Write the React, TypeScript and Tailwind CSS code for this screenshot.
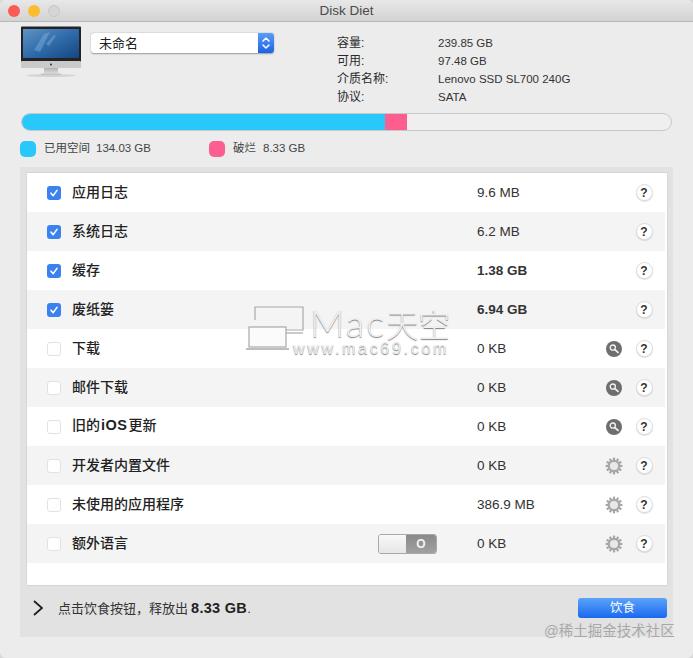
import React from "react";

const font = "font-['Liberation_Sans','Noto_Sans_CJK_SC',sans-serif]";

type Row = { label: React.ReactNode; size: string; bold?: boolean; checked?: boolean; tool?: "search" | "gear"; toggle?: boolean };

const rows: Row[] = [
  { label: "应用日志", size: "9.6 MB", checked: true },
  { label: "系统日志", size: "6.2 MB", checked: true },
  { label: "缓存", size: "1.38 GB", bold: true, checked: true },
  { label: "废纸篓", size: "6.94 GB", bold: true, checked: true },
  { label: "下载", size: "0 KB", tool: "search" },
  { label: "邮件下载", size: "0 KB", tool: "search" },
  { label: <>旧的<b className="mx-[1px] text-[14.5px] font-bold tracking-[0.5px]">iOS</b>更新</>, size: "0 KB", tool: "search" },
  { label: "开发者内置文件", size: "0 KB", tool: "gear" },
  { label: "未使用的应用程序", size: "386.9 MB", tool: "gear" },
  { label: "额外语言", size: "0 KB", tool: "gear", toggle: true },
];

const info = [
  ["容量:", "239.85 GB"],
  ["可用:", "97.48 GB"],
  ["介质名称:", "Lenovo SSD SL700 240G"],
  ["协议:", "SATA"],
];

function IMac() {
  return (
    <svg width="62" height="52" viewBox="0 0 62 52" className="block">
      <defs>
        <linearGradient id="scr" x1="0" y1="0" x2="1" y2="1">
          <stop offset="0" stopColor="#5f93c4" />
          <stop offset="0.5" stopColor="#2f6cab" />
          <stop offset="1" stopColor="#164580" />
        </linearGradient>
        <linearGradient id="stand" x1="0" y1="0" x2="0" y2="1">
          <stop offset="0" stopColor="#a8a8a8" />
          <stop offset="1" stopColor="#e0e0e0" />
        </linearGradient>
      </defs>
      <ellipse cx="31" cy="49.5" rx="25" ry="1.4" fill="#d2d2d2" />
      <rect x="24" y="41" width="14" height="7" fill="url(#stand)" />
      <rect x="21" y="47.5" width="20" height="1.5" fill="#c4c4c4" />
      <rect x="1" y="0.5" width="60" height="36" rx="1" fill="#232326" />
      <rect x="3" y="3" width="56" height="29" fill="url(#scr)" />
      <path d="M14 24 L24 8 L30 6 L20 26 Z M26 18 L34 9 L36 10 L29 20 Z" fill="#9cc3e2" opacity="0.35" />
      <rect x="1" y="35" width="60" height="7" rx="1" fill="#c9c9c9" />
      <circle cx="31" cy="38.5" r="1" fill="#333" />
    </svg>
  );
}

function Stepper() {
  return (
    <div className="flex h-5 w-4 items-center justify-center rounded-r-[3px] bg-gradient-to-b from-[#5a9cf8] to-[#1a62e6]">
      <svg width="10" height="14" viewBox="0 0 10 14" fill="none" stroke="#fff" strokeWidth="1.5" strokeLinecap="round" strokeLinejoin="round">
        <path d="M2 5 L5 2 L8 5" />
        <path d="M2 9 L5 12 L8 9" />
      </svg>
    </div>
  );
}

function Check({ on }: { on?: boolean }) {
  if (on)
    return (
      <div className="flex h-[14px] w-[14px] items-center justify-center rounded-[3px] bg-[#3b82f0]">
        <svg width="10" height="10" viewBox="0 0 10 10" fill="none" stroke="#fff" strokeWidth="1.6" strokeLinecap="round" strokeLinejoin="round">
          <path d="M2 5.2 L4.2 7.6 L8 2.4" />
        </svg>
      </div>
    );
  return <div className="h-[14px] w-[14px] rounded-[3px] border border-[#e2e2e2] bg-white" />;
}

function SearchBadge() {
  return (
    <svg width="16" height="16" viewBox="0 0 16 16" className="block">
      <circle cx="8" cy="8" r="8" fill="#6e6e6e" />
      <circle cx="6.8" cy="6.6" r="2.6" fill="none" stroke="#f2f2f2" strokeWidth="1.3" />
      <path d="M8.8 8.6 L12 11.4" stroke="#f2f2f2" strokeWidth="1.8" strokeLinecap="round" />
    </svg>
  );
}

function Gear() {
  const teeth = Array.from({ length: 12 }, (_, i) => i * 30);
  return (
    <svg width="18" height="18" viewBox="0 0 18 18" className="block">
      {teeth.map((a) => (
        <rect key={a} x="7.9" y="0.6" width="2.2" height="3.2" fill="#a6a6a6" transform={`rotate(${a} 9 9)`} />
      ))}
      <circle cx="9" cy="9" r="6.3" fill="#a8a8a8" />
      <circle cx="9" cy="9" r="4.1" fill="#e8e8e8" />
    </svg>
  );
}

function Help() {
  return (
    <div className="flex h-[17px] w-[17px] items-center justify-center rounded-full border border-[#dcdcdc] bg-white text-[12px] font-bold leading-none text-[#333] shadow-[0_1px_1px_rgba(0,0,0,0.12)]">
      ?
    </div>
  );
}

function Toggle() {
  return (
    <div className="flex h-5 w-[59px] overflow-hidden rounded-[3px] border border-[#a8a8a8]">
      <div className="w-[27px] bg-gradient-to-b from-[#f8f8f8] to-[#e6e6e6]" />
      <div className="flex flex-1 items-center justify-center bg-gradient-to-b from-[#8a8a8a] to-[#a0a0a0] text-[12px] font-bold leading-none text-[#f4f4f4]">
        O
      </div>
    </div>
  );
}

function Watermark() {
  return (
    <div className="pointer-events-none absolute left-[246px] top-[305px] flex items-start gap-[2px] [text-shadow:0_1px_1px_rgba(0,0,0,0.5)]">
      <svg width="62" height="48" viewBox="0 0 62 48" fill="none" stroke="#a8a8a8" strokeWidth="1.2" className="block">
        <path d="M9 15 V2 H57 V25 H32" />
        <path d="M32 28 H57" />
        <rect x="3" y="22" width="37" height="20" fill="#fbfbfb" />
        <path d="M0 44 H43" strokeWidth="1.6" />
      </svg>
      <div className="flex flex-col items-start">
        <div className="h-[35px] font-['Lato',sans-serif] text-[38px] font-light leading-[35px] tracking-[2px] text-[#f0f0f0]">
          Mac<span className="font-['Noto_Sans_CJK_SC',sans-serif] text-[32px] tracking-[0px]">天空</span>
        </div>
        <div className="-ml-[17px] font-['Liberation_Sans',sans-serif] text-[16px] leading-[18px] tracking-[2.7px] text-[#ececec]">
          www.mac69.com
        </div>
      </div>
    </div>
  );
}

export default function App() {
  return (
    <div className={`${font} relative h-[658px] w-[693px] overflow-hidden bg-[#d8d8d8]`}>
      <div className="flex h-full flex-col overflow-hidden rounded-[6px] bg-[#ececec]">
        <div className="grid h-[22px] grid-cols-[1fr_auto_1fr] items-center border-b border-[#b8b8b8] bg-gradient-to-b from-[#e8e8e8] to-[#d3d3d3]">
          <div className="flex gap-2 pl-2">
            <div className="h-3 w-3 rounded-full bg-[#fb5b55]" />
            <div className="h-3 w-3 rounded-full bg-[#fdbb2e]" />
            <div className="h-3 w-3 rounded-full border border-[#c6c6c6] bg-[#d6d6d6]" />
          </div>
          <div className="text-[13.5px] leading-none text-[#4a4a4a]">Disk Diet</div>
          <div />
        </div>

        <div className="flex h-[91px] pl-5">
          <div className="mt-[4px]">
            <IMac />
          </div>
          <div className="ml-[9px] mt-[11px] flex h-5 w-[183px] items-center justify-between rounded-[3px] bg-white shadow-[0_0.5px_1.5px_rgba(0,0,0,0.35)]">
            <span className="pl-2 text-[13px] leading-none text-[#222]">未命名</span>
            <Stepper />
          </div>
          <div className="ml-[63px] mt-[12px] grid grid-cols-[101px_auto] content-start">
            {info.map(([k, v]) => (
              <React.Fragment key={k}>
                <div className="h-[18px] text-[12px] leading-[18px] text-[#2a2a2a]">{k}</div>
                <div className="h-[18px] text-[11.5px] leading-[18px] text-[#333]">{v}</div>
              </React.Fragment>
            ))}
          </div>
        </div>

        <div className="ml-[21px] flex h-[18px] w-[651px] overflow-hidden rounded-full border border-[#c8c8c8] bg-[#efefef]">
          <div className="-my-px -ml-px w-[364px] bg-[#28c8fa]" />
          <div className="-my-px w-[22px] bg-[#fc5f8f]" />
        </div>

        <div className="ml-5 mt-[10px] flex h-4 items-center text-[11.5px] leading-none text-[#444]">
          <div className="h-4 w-4 rounded-[5px] bg-[#28c8fa]" />
          <span className="ml-2 w-[52px]">已用空间</span>
          <span className="w-[113px]">134.03 GB</span>
          <div className="h-4 w-4 rounded-[5px] bg-[#fc5f8f]" />
          <span className="ml-2 w-[30px]">破烂</span>
          <span>8.33 GB</span>
        </div>

        <div className="ml-5 mt-[10px] flex h-[470px] w-[653px] flex-col bg-[#e2e2e2] px-[7px] pt-[6px]">
          <div className="flex h-[412px] w-[640px] flex-col bg-white shadow-[0_0_1px_rgba(0,0,0,0.3)]">
            {rows.map((r, i) => (
              <div key={i} className={`flex h-[39px] shrink-0 items-center pl-5 ${i % 2 ? "mr-[2px] bg-[#f4f4f4]" : ""}`}>
                <Check on={r.checked} />
                <div className="ml-[11px] w-[306px] pb-[2px] text-[14px] font-medium leading-none text-[#222]">{r.label}</div>
                <div className="flex w-[59px]">{r.toggle && <Toggle />}</div>
                <div className={`ml-10 w-[121px] text-[13.5px] leading-none text-[#333] ${r.bold ? "font-bold" : ""}`}>{r.size}</div>
                <div className="flex w-[31px] justify-center">
                  {r.tool === "search" && <SearchBadge />}
                  {r.tool === "gear" && <Gear />}
                </div>
                <div className="flex w-[30px] justify-center">
                  <Help />
                </div>
              </div>
            ))}
          </div>
          <div className="flex flex-1 items-start pt-[13px]">
            <svg width="12" height="18" viewBox="0 0 12 18" fill="none" stroke="#1a1a1a" strokeWidth="1.7" className="ml-[5px] mt-[1px] block">
              <path d="M2 2 L10 9 L2 16" />
            </svg>
            <div className="ml-[14px] flex h-5 items-center text-[13px] leading-none text-[#333]">
              <span className="mr-[3px]">点击饮食按钮，释放出</span>
              <b className="text-[14.5px] tracking-[0.3px] text-[#222]">8.33 GB</b>
              <span>.</span>
            </div>
            <div className="-mr-px ml-auto flex h-5 w-[89px] items-center justify-center rounded-[3px] bg-gradient-to-b from-[#5aa2fa] to-[#1a68ee] text-[12.5px] leading-none text-white">
              饮食
            </div>
          </div>
        </div>
      </div>
      <Watermark />
      <div className="pointer-events-none absolute left-[544px] top-[624px] text-[14.5px] leading-none text-[#a8a8a8]">@稀土掘金技术社区</div>
    </div>
  );
}
